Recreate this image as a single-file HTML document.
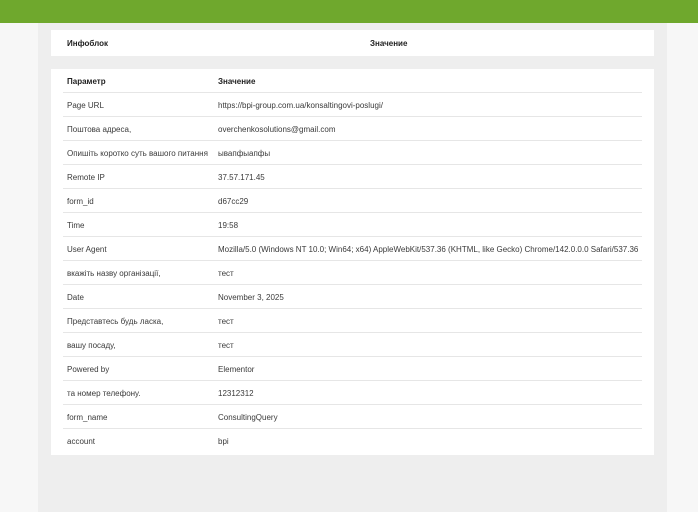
<!DOCTYPE html>
<html><head><meta charset="utf-8"><style>
*{margin:0;padding:0;box-sizing:border-box}
body{width:698px;height:512px;background:#f7f7f7;font-family:"Liberation Sans","DejaVu Sans",sans-serif;font-size:8px;color:#3a3a3a;position:relative;overflow:hidden}
.top{position:absolute;left:0;top:0;width:698px;height:23px;background:#6fa82d}
.col{position:absolute;left:38px;top:23px;width:629px;height:489px;background:#eee}
.b1{position:absolute;left:51px;top:30px;width:603px;height:26px;background:#fff}
.b1 span{position:absolute;top:9px;font-weight:bold;color:#222}
.b2{position:absolute;left:51px;top:69px;width:603px;height:386px;background:#fff;padding:0 12px}
.r{height:24px;border-top:1px solid #e6e6e6;position:relative}
.r.h{height:23px;border-top:none}
.r span{position:absolute;top:8px;white-space:nowrap}
.r span:first-child{left:4px}
.r span:last-child{left:155px}
.h span{font-weight:bold;color:#222}
</style></head><body>
<div class="top"></div><div class="col"></div>
<div class="b1"><span style="left:16px">Инфоблок</span><span style="left:319px">Значение</span></div>
<div class="b2">
<div class="r h"><span>Параметр</span><span>Значение</span></div>
<div class="r"><span>Page URL</span><span>https://bpi-group.com.ua/konsaltingovi-poslugi/</span></div>
<div class="r"><span>Поштова адреса,</span><span>overchenkosolutions@gmail.com</span></div>
<div class="r"><span>Опишіть коротко суть вашого питання</span><span>ывапфыапфы</span></div>
<div class="r"><span>Remote IP</span><span>37.57.171.45</span></div>
<div class="r"><span>form_id</span><span>d67cc29</span></div>
<div class="r"><span>Time</span><span>19:58</span></div>
<div class="r"><span>User Agent</span><span>Mozilla/5.0 (Windows NT 10.0; Win64; x64) AppleWebKit/537.36 (KHTML, like Gecko) Chrome/142.0.0.0 Safari/537.36</span></div>
<div class="r"><span>вкажіть назву організації,</span><span>тест</span></div>
<div class="r"><span>Date</span><span>November 3, 2025</span></div>
<div class="r"><span>Представтесь будь ласка,</span><span>тест</span></div>
<div class="r"><span>вашу посаду,</span><span>тест</span></div>
<div class="r"><span>Powered by</span><span>Elementor</span></div>
<div class="r"><span>та номер телефону.</span><span>12312312</span></div>
<div class="r"><span>form_name</span><span>ConsultingQuery</span></div>
<div class="r"><span>account</span><span>bpi</span></div>
</div>
</body></html>
